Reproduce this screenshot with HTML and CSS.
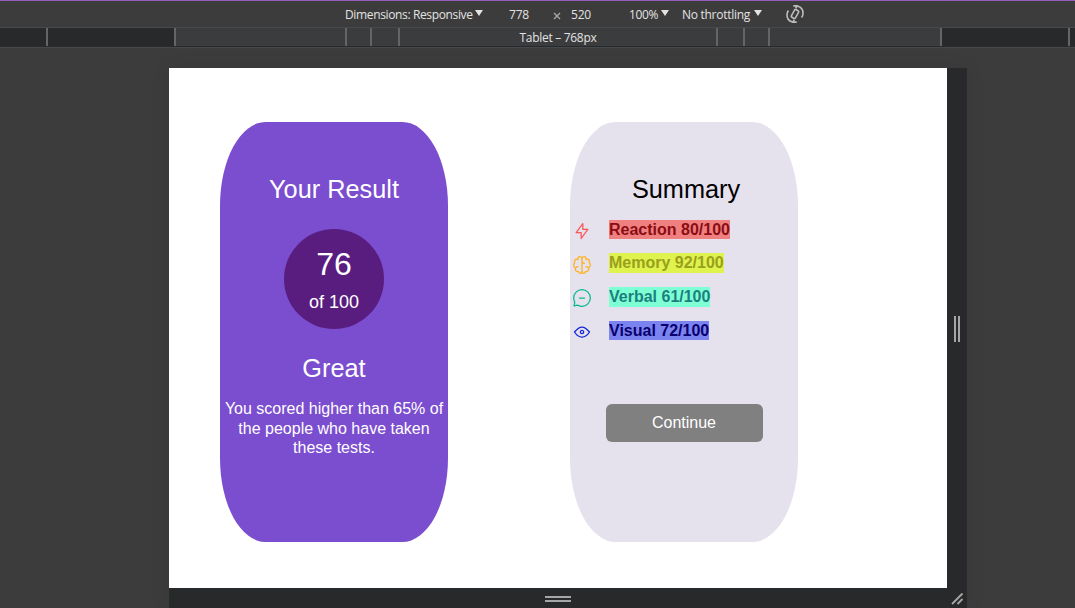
FILE: index.html
```html
<!DOCTYPE html>
<html lang="en">
<head>
<meta charset="utf-8">
<title>Results summary</title>
<link rel="stylesheet" href="styles.css">
</head>
<body>
<header class="toolbar">
  <span class="tool device">Dimensions: Responsive</span><i class="caret"></i>
  <span class="tool width">778</span>
  <svg class="times" viewBox="0 0 8 8"><path d="M1 1l6 6M7 1L1 7"/></svg>
  <span class="tool height">520</span>
  <span class="tool zoom">100%</span><i class="caret"></i>
  <span class="tool throttle">No throttling</span><i class="caret"></i>
  <svg class="rotate" viewBox="0 0 20 20"><rect x="7.700" y="5.600" width="4.600" height="8.800" rx="1.300" transform="rotate(30 10 10)"/><path d="M8.300 1.900h4.200c3.400 1 5.700 4 5.500 7.600-.1 1.600-.6 2.900-1.400 4M12.300 1.900l-1.600 2.300M11.700 18.100H7.500C4.100 17.100 1.800 14.100 2 10.500c.1-1.600.6-2.900 1.400-4M7.700 18.100l1.600-2.300"/></svg>
</header>
<div class="ruler">
  <span class="mark outer-edge"></span><span class="mark outer"></span><span class="mark laptop"></span><span class="mark mobile-l"></span><span class="mark mobile-m"></span><span class="mark tablet">Tablet – 768px</span><span class="mark mobile-s"></span><span class="mark mobile-m2"></span><span class="mark laptop-r"></span><span class="mark outer"></span><span class="rest"></span>
</div>
<div class="stage">
  <div class="device-frame">
    <main class="page">
      <section class="card result">
        <h2 class="title">Your Result</h2>
        <div class="score"><span class="value">76</span><span class="total">of 100</span></div>
        <h2 class="title grade">Great</h2>
        <p class="message">You scored higher than 65% of the people who have taken these tests.</p>
      </section>
      <section class="card summary">
        <h2 class="title">Summary</h2>
        <ul class="stats">
          <li class="stat reaction"><svg class="icon" viewBox="0 0 20 20"><path d="M10.833 8.333V2.500l-6.666 9.167h5V17.500l6.666-9.167h-5Z"/></svg><span class="label">Reaction 80/100</span></li>
          <li class="stat memory"><svg class="icon" viewBox="0 0 20 20"><path d="M5.833 11.667a2.500 2.500 0 1 0 .834 4.858"/><path d="M3.553 13.004a3.333 3.333 0 0 1-.728-5.530m.025-.067a2.083 2.083 0 0 1 2.983-2.824m.199.054A2.083 2.083 0 1 1 10 3.750v12.917a1.667 1.667 0 0 1-3.333 0M10 5.833a2.500 2.500 0 0 0 2.500 2.500m1.667 3.334a2.500 2.500 0 1 1-.834 4.858"/><path d="M16.447 13.004a3.334 3.334 0 0 0 .728-5.530m-.025-.067a2.083 2.083 0 0 0-2.983-2.824M10 3.750a2.085 2.085 0 0 1 2.538-2.033 2.084 2.084 0 0 1 1.430 2.920m-.635 12.030a1.667 1.667 0 0 1-3.333 0"/></svg><span class="label">Memory 92/100</span></li>
          <li class="stat verbal"><svg class="icon" viewBox="0 0 20 20"><path d="M7.500 10h5M10 18.333A8.333 8.333 0 1 0 1.667 10c0 1.518.406 2.942 1.115 4.167l-.699 3.750 3.750-.699A8.295 8.295 0 0 0 10 18.333Z"/></svg><span class="label">Verbal 61/100</span></li>
          <li class="stat visual"><svg class="icon" viewBox="0 0 20 20"><path d="M10 11.667a1.667 1.667 0 1 0 0-3.334 1.667 1.667 0 0 0 0 3.334Z"/><path d="M17.500 10c-1.574 2.492-4.402 5-7.500 5s-5.926-2.508-7.500-5C4.416 7.632 6.660 5 10 5s5.584 2.632 7.500 5Z"/></svg><span class="label">Visual 72/100</span></li>
        </ul>
        <button class="continue">Continue</button>
      </section>
    </main>
    <div class="grip side"></div>
    <div class="grip bottom"></div>
    <svg class="corner" viewBox="0 0 20 20"><path d="M5 16L15.500 5.500M10.500 16l5-5"/></svg>
  </div>
</div>
</body>
</html>
```
FILE: styles.css
```css
* { box-sizing: border-box; }
body {
  margin: 0;
  width: 1075px;
  height: 608px;
  overflow: hidden;
  display: flex;
  flex-direction: column;
  background: #3c3c3c;
  font-family: "Liberation Sans", Arial, sans-serif;
}

/* toolbar */
.toolbar {
  height: 28px;
  border-top: 1px solid #955cbb;
  border-bottom: 1px solid #47484b;
  display: flex;
  align-items: center;
  padding-left: 345px;
  color: #e3e3e3;
  font: 12px/16px "Open Sans", "Noto Sans", sans-serif;
}
.tool { flex: none; padding-top: 2px; white-space: nowrap; }
.device { width: 130px; letter-spacing: -0.36px; }
.caret {
  flex: none;
  width: 8px;
  height: 6px;
  margin-bottom: 2px;
  background: #e3e3e3;
  clip-path: polygon(0 0, 100% 0, 50% 100%);
}
.width { margin-left: 26px; width: 44px; letter-spacing: -0.2px; }
.times { width: 8px; height: 8px; margin-top: 4px; fill: none; stroke: #a8a8a8; stroke-width: 1.4; }
.height { margin-left: 10px; width: 58px; letter-spacing: -0.2px; }
.zoom { width: 32px; letter-spacing: -0.4px; }
.throttle { margin-left: 13px; width: 72px; letter-spacing: -0.28px; }
.rotate { width: 20px; height: 20px; margin-left: 23px; fill: none; stroke: #bcbcbc; stroke-width: 1.6; }

/* breakpoint ruler */
.ruler {
  height: 20px;
  display: flex;
  background: #3b3c3e;
  border-bottom: 1px solid #47484b;
  box-shadow: inset 0 -1px #28292b;
}
.mark { flex: none; height: 18px; border-right: 2px solid #656565; }
.outer-edge { width: 48px; background: #28292b; }
.outer { width: 128px; background: #28292b; }
.laptop { width: 171px; }
.mobile-l { width: 25px; }
.mobile-m { width: 28px; }
.tablet {
  width: 318px;
  text-align: center;
  color: #e3e3e3;
  font: 12px/19px "Open Sans", "Noto Sans", sans-serif;
  letter-spacing: -0.3px;
}
.mobile-s { width: 27px; }
.mobile-m2 { width: 25px; }
.laptop-r { width: 172px; }
.rest { flex: 1; height: 18px; background: #28292b; }

/* emulated device */
.stage { flex: 1; padding: 20px 0 0 169px; }
.device-frame {
  width: 798px;
  height: 540px;
  display: grid;
  grid-template: 520px 20px / 778px 20px;
  place-items: center;
  background: #28292b;
  box-shadow: 0 0 20px rgba(0, 0, 0, 0.07);
}
.grip.side { width: 6px; height: 26px; margin-top: 2px; border: solid #a6a6a6; border-width: 0 2px; }
.grip.bottom { width: 26px; height: 6px; margin-top: 2px; border: solid #a6a6a6; border-width: 2px 0; }
.corner { width: 20px; height: 20px; fill: none; stroke: #a6a6a6; stroke-width: 1.8; }

/* page content */
.page {
  width: 778px;
  height: 520px;
  padding: 54px 51px;
  display: flex;
  gap: 122px;
  align-items: flex-start;
  background: #fff;
}
.card {
  width: 228px;
  height: 420px;
  padding-top: 53px;
  border-radius: 20%;
  display: flex;
  flex-direction: column;
  align-items: center;
}
.result { background: #7b4dcf; color: #fff; }
.summary { background: #e5e1ed; color: #000; }
.title { margin: 0; font-size: 25.3px; font-weight: 400; line-height: 29px; }
.summary .title { padding-left: 4px; }
.score {
  width: 100px;
  height: 100px;
  margin: 25px 0;
  padding-top: 17px;
  border-radius: 50%;
  background: #591d80;
  display: flex;
  flex-direction: column;
  align-items: center;
}
.value { font-size: 32px; line-height: 37px; }
.total { margin-top: 9px; font-size: 18px; line-height: 21px; }
.message { margin: 16px 0 0; width: 224px; text-align: center; font-size: 16px; line-height: 19.6px; }
.stats {
  align-self: stretch;
  margin: 16px 0 0;
  padding: 0 0 0 2px;
  list-style: none;
  display: flex;
  flex-direction: column;
  gap: 13.67px;
}
.stat { height: 20px; display: flex; gap: 17px; align-items: flex-start; font-size: 16px; font-weight: 700; }
.icon { width: 20px; height: 20px; margin-top: 1px; fill: none; stroke: currentColor; stroke-width: 1.25; stroke-linecap: round; stroke-linejoin: round; }
.label { height: 19px; line-height: 19px; }
.reaction .icon { color: #ff5555; }
.reaction .label { background: #f08080; color: #8b0c13; }
.memory .icon { color: #ffb21e; }
.memory .label { height: 20px; margin-top: -0.67px; background: #e0f24e; color: #98a01c; }
.verbal .icon { color: #00bb8f; }
.verbal .label { height: 20px; background: #7fffd4; color: #1c7f7f; }
.visual .icon { color: #1125d6; }
.visual .label { background: #7b83f0; color: #09006e; }
.continue {
  width: 157px;
  height: 38px;
  margin: 63px 0 0;
  padding: 1px 0 0;
  border: 0;
  border-radius: 6px;
  background: #808080;
  color: #fff;
  font: 16px/18px "Liberation Sans", Arial, sans-serif;
}
```
